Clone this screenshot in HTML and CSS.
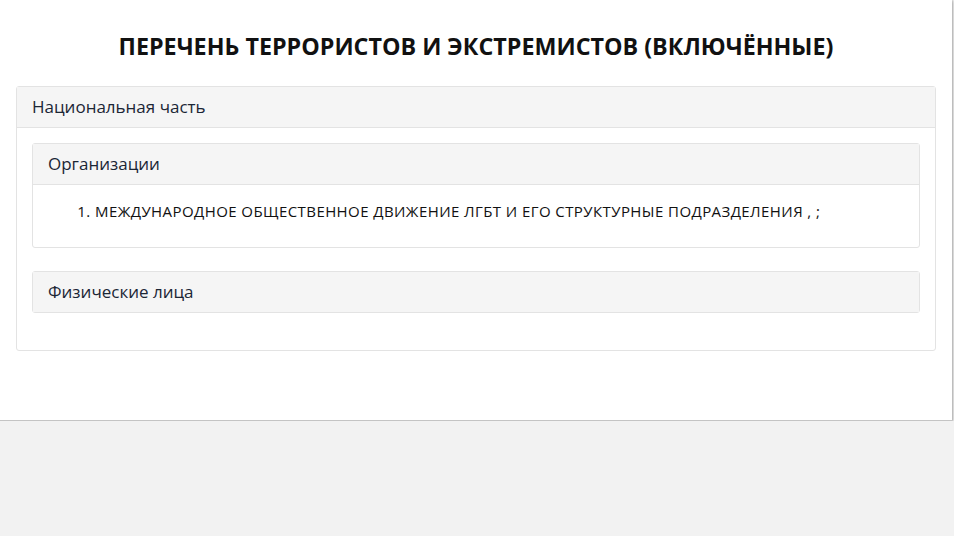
FILE: index.html
```html
<!DOCTYPE html>
<html lang="ru">
<head>
<meta charset="utf-8">
<title>Перечень</title>
<link rel="stylesheet" href="styles.css">
</head>
<body>
<div class="page">
  <h1 class="title">ПЕРЕЧЕНЬ ТЕРРОРИСТОВ И ЭКСТРЕМИСТОВ (ВКЛЮЧЁННЫЕ)</h1>
  <div class="card outer">
    <div class="card-head">Национальная часть</div>
    <div class="card-body">
      <div class="card inner first">
        <div class="card-head">Организации</div>
        <div class="card-body list-body">
          <ol class="list">
            <li>МЕЖДУНАРОДНОЕ ОБЩЕСТВЕННОЕ ДВИЖЕНИЕ ЛГБТ И ЕГО СТРУКТУРНЫЕ ПОДРАЗДЕЛЕНИЯ , ;</li>
          </ol>
        </div>
      </div>
      <div class="card inner">
        <div class="card-head">Физические лица</div>
      </div>
    </div>
  </div>
</div>
</body>
</html>
```
FILE: styles.css
```css
html, body {
  margin: 0;
  padding: 0;
  background: #f2f2f2;
  font-family: "Open Sans", "Noto Sans", sans-serif;
  color: #111;
}
.page {
  width: 952px;
  height: 421px;
  box-sizing: border-box;
  background: #fff;
  padding: 30px 16px 0 16px;
  border-bottom: 1px solid #c4c4c4;
  box-shadow: 0 1px 3px rgba(0,0,0,0.35), 1px 0 2px rgba(0,0,0,0.15);
}
.title {
  margin: 0 0 24px 0;
  text-align: center;
  font-size: 23.3px;
  line-height: 32px;
  font-weight: 700;
  color: #111;
}
.card {
  border: 1px solid #e3e3e3;
  border-radius: 3px;
  background: #fff;
}
.card-head {
  background: #f5f5f5;
  height: 40px;
  line-height: 40px;
  padding: 0 15px;
  font-size: 17px;
  font-weight: 500;
  color: #1b2635;
  border-bottom: 1px solid #e3e3e3;
}
.inner > .card-head:last-child {
  border-bottom: none;
}
.outer > .card-body {
  padding: 15px 15px 37px 15px;
}
.inner.first {
  margin-bottom: 23px;
}
.list-body {
  height: 62px;
}
.list {
  margin: 0;
  padding: 16px 0 0 62px;
  font-size: 15px;
  letter-spacing: 0.42px;
  line-height: 20px;
  color: #111;
}
```
